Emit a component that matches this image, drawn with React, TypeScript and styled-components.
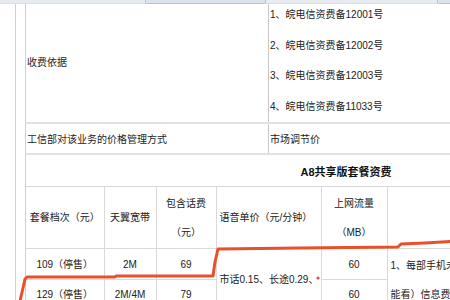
import React from "react";
import styled, { createGlobalStyle } from "styled-components";

const Global = createGlobalStyle`
  html, body { margin: 0; padding: 0; background: #fff; }
  body { width: 450px; height: 300px; overflow: hidden; }
  #root { width: 450px; height: 300px; }
`;

const Page = styled.div`
  position: relative;
  width: 450px;
  height: 300px;
  overflow: hidden;
  display: flex;
  font-family: "Liberation Sans", "Noto Sans CJK SC", sans-serif;
  font-size: 10px;
  color: #222;
`;

const TopStrip = styled.div`
  position: absolute;
  left: 0;
  top: 0;
  width: 450px;
  height: 4px;
  background: #e8ecf0;
  border-bottom: 1px solid #d9dfe6;
  box-sizing: border-box;
  z-index: 3;
`;

const StripTab = styled.div<{ $left: number; $width: number }>`
  position: absolute;
  top: 0;
  left: ${(p) => p.$left}px;
  width: ${(p) => p.$width}px;
  height: 4px;
  background: #dbe3ec;
  border-left: 1px solid #b7c3cf;
  border-right: 1px solid #b7c3cf;
  border-bottom: 1px solid #b7c3cf;
  border-radius: 0 0 2px 2px;
  box-sizing: border-box;
`;

const Gutter = styled.div`
  flex: 0 0 15px;
  border-right: 1px solid #d0d0d0;
  height: 300px;
`;

const Content = styled.div`
  margin-left: 9px;
  flex: 0 0 auto;
`;

const OuterTable = styled.table`
  width: 640px;
  table-layout: fixed;
  border-collapse: collapse;
  border-left: 1px solid #d0d0d0;
`;

const LabelCell = styled.td<{ $h: number }>`
  height: ${(p) => p.$h}px;
  padding: 0 0 0 1px;
  vertical-align: middle;
  border-right: 1px solid #c8c8c8;
  border-bottom: 2px solid #e2e2e2;
  white-space: nowrap;
`;

const ValueCell = styled.td`
  padding: 0 0 0 1px;
  vertical-align: top;
  border-bottom: 2px solid #e2e2e2;
  white-space: nowrap;
`;

const ValueCellMid = styled(ValueCell)`
  vertical-align: middle;
`;

const ValueLine = styled.div`
  height: 30.6px;
  line-height: 30.6px;
`;

const NestHolder = styled.td`
  padding: 0;
`;

const InnerTable = styled.table`
  width: 640px;
  table-layout: fixed;
  border-collapse: collapse;
`;

const TitleCell = styled.td`
  height: 29px;
  text-align: center;
  font-weight: bold;
  font-size: 11px;
  color: #111;
  border-bottom: 1px solid #d8d8d8;
  vertical-align: middle;
`;

const Cell = styled.td<{ $align?: string; $h?: number; $top?: boolean }>`
  height: ${(p) => (p.$h ? `${p.$h}px` : "auto")};
  padding: ${(p) => (p.$top ? "2px" : "0")} 0 0 ${(p) => (p.$align === "left" ? "3px" : "0")};
  text-align: ${(p) => p.$align || "center"};
  vertical-align: ${(p) => (p.$top ? "top" : "middle")};
  line-height: 29px;
  border-right: 1px solid #dadada;
  border-bottom: 1px solid #dadada;
  white-space: nowrap;
  overflow: hidden;
`;

const Overlay = styled.svg`
  position: absolute;
  left: 0;
  top: 0;
  pointer-events: none;
  z-index: 2;
`;

export default function App() {
  return (
    <>
      <Global />
      <Page>
        <TopStrip>
          <StripTab $left={145} $width={121} />
          <StripTab $left={437} $width={20} />
        </TopStrip>
        <Gutter />
        <Content>
          <OuterTable>
            <colgroup>
              <col style={{ width: 243 }} />
              <col style={{ width: 397 }} />
            </colgroup>
            <tbody>
              <tr>
                <LabelCell $h={120}>收费依据</LabelCell>
                <ValueCell>
                  <ValueLine>1、皖电信资费备12001号</ValueLine>
                  <ValueLine>2、皖电信资费备12002号</ValueLine>
                  <ValueLine>3、皖电信资费备12003号</ValueLine>
                  <ValueLine>4、皖电信资费备11033号</ValueLine>
                </ValueCell>
              </tr>
              <tr>
                <LabelCell $h={29}>工信部对该业务的价格管理方式</LabelCell>
                <ValueCellMid>市场调节价</ValueCellMid>
              </tr>
              <tr>
                <NestHolder colSpan={2}>
                  <InnerTable>
                    <colgroup>
                      <col style={{ width: 78 }} />
                      <col style={{ width: 52 }} />
                      <col style={{ width: 60 }} />
                      <col style={{ width: 105 }} />
                      <col style={{ width: 66 }} />
                      <col style={{ width: 279 }} />
                    </colgroup>
                    <tbody>
                      <tr>
                        <TitleCell colSpan={6}>A8共享版套餐资费</TitleCell>
                      </tr>
                      <tr>
                        <Cell $h={61}>套餐档次（元）</Cell>
                        <Cell>天翼宽带</Cell>
                        <Cell>
                          包含话费
                          <br />
                          （元）
                        </Cell>
                        <Cell $align="left">语音单价（元/分钟）</Cell>
                        <Cell>
                          上网流量
                          <br />
                          （MB）
                        </Cell>
                        <Cell />
                      </tr>
                      <tr>
                        <Cell $h={29}>109（停售）</Cell>
                        <Cell>2M</Cell>
                        <Cell>69</Cell>
                        <Cell $align="left" rowSpan={2}>
                          市话0.15、长途0.29、
                        </Cell>
                        <Cell>60</Cell>
                        <Cell $align="left" rowSpan={2} $top>
                          1、每部手机未
                          <br />
                          能看）信息费
                        </Cell>
                      </tr>
                      <tr>
                        <Cell $h={29}>129（停售）</Cell>
                        <Cell>2M/4M</Cell>
                        <Cell>79</Cell>
                        <Cell>60</Cell>
                      </tr>
                    </tbody>
                  </InnerTable>
                </NestHolder>
              </tr>
            </tbody>
          </OuterTable>
        </Content>
        <Overlay width="450" height="300" viewBox="0 0 450 300">
          <path
            d="M20 301 L23 288 L25 279 L27 277 L115 277 L116 276 L213 276 L215 262 L218 249 L300 248 L398 247 L401 244 L425 243 L450 241.5"
            fill="none"
            stroke="#e8502a"
            strokeWidth="3"
            strokeLinejoin="round"
            strokeLinecap="round"
          />
          <circle cx="318" cy="278" r="1.6" fill="#e8502a" />
        </Overlay>
      </Page>
    </>
  );
}
